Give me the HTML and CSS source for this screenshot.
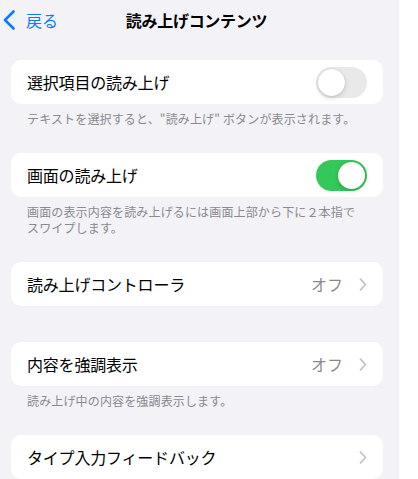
FILE: index.html
```html
<!DOCTYPE html>
<html lang="ja">
<head>
<meta charset="utf-8">
<link rel="stylesheet" href="styles.css">
</head>
<body>
<div class="screen">
  <header class="nav">
    <a class="back">
      <svg class="back-chev" width="14" height="20" viewBox="0 0 14 20"><path d="M11.5 1.5 L3 10 L11.5 18.5" fill="none" stroke="#0a7aff" stroke-width="2.6" stroke-linecap="round" stroke-linejoin="round"/></svg>
      <span>戻る</span>
    </a>
    <h1 class="title">読み上げコンテンツ</h1>
    <span></span>
  </header>

  <section class="section">
    <div class="card row">
      <span class="label">選択項目の読み上げ</span>
      <span class="switch"><span class="knob"></span></span>
    </div>
    <p class="footer">テキストを選択すると、"読み上げ" ボタンが表示されます。</p>
  </section>

  <section class="section">
    <div class="card row">
      <span class="label">画面の読み上げ</span>
      <span class="switch on"><span class="knob"></span></span>
    </div>
    <p class="footer">画面の表示内容を読み上げるには画面上部から下に２本指で<br>スワイプします。</p>
  </section>

  <section class="section nofoot">
    <div class="card row">
      <span class="label">読み上げコントローラ</span>
      <span class="value">オフ<svg class="chev" width="8" height="13" viewBox="0 0 8 13"><path d="M1.5 1.2 L6.5 6.5 L1.5 11.8" fill="none" stroke="#c4c4c7" stroke-width="1.8" stroke-linecap="round" stroke-linejoin="round"/></svg></span>
    </div>
  </section>

  <section class="section">
    <div class="card row">
      <span class="label">内容を強調表示</span>
      <span class="value">オフ<svg class="chev" width="8" height="13" viewBox="0 0 8 13"><path d="M1.5 1.2 L6.5 6.5 L1.5 11.8" fill="none" stroke="#c4c4c7" stroke-width="1.8" stroke-linecap="round" stroke-linejoin="round"/></svg></span>
    </div>
    <p class="footer">読み上げ中の内容を強調表示します。</p>
  </section>

  <section class="section">
    <div class="card row">
      <span class="label">タイプ入力フィードバック</span>
      <span class="value"><svg class="chev" width="8" height="13" viewBox="0 0 8 13"><path d="M1.5 1.2 L6.5 6.5 L1.5 11.8" fill="none" stroke="#c4c4c7" stroke-width="1.8" stroke-linecap="round" stroke-linejoin="round"/></svg></span>
    </div>
  </section>
</div>
</body>
</html>
```
FILE: styles.css
```css
* { box-sizing: border-box; }
html, body {
  margin: 0;
  padding: 0;
  background: #ffffff;
}
body {
  font-family: "Noto Sans CJK JP", "Noto Sans", sans-serif;
  color: #000;
}
.screen {
  width: 399px;
  height: 479px;
  background: #f2f2f7;
  overflow: hidden;
}
.nav {
  height: 40px;
  display: grid;
  grid-template-columns: 1fr auto 1fr;
  align-items: center;
  padding-right: 6px;
}
.back {
  display: flex;
  align-items: center;
  color: #0a7aff;
  font-size: 16px;
  padding-left: 2px;
  gap: 10px;
}
.back-chev { display: block; }
.title {
  margin: 0;
  font-size: 16px;
  font-weight: 700;
  letter-spacing: -0.3px;
}
.section {
  margin: 20px 16px 0 11px;
}
.section + .section { margin-top: 26px; }
.nofoot + .section { margin-top: 36px; }
.card {
  background: #fff;
  border-radius: 10px;
}
.row {
  height: 44px;
  display: flex;
  align-items: center;
  justify-content: space-between;
  padding: 0 16px;
}
.label {
  font-size: 16px;
  letter-spacing: -0.2px;
}
.value {
  display: flex;
  align-items: center;
  color: #8a8a8e;
  font-size: 16px;
  gap: 16px;
}
.chev { display: block; }
.switch {
  width: 51px;
  height: 31px;
  border-radius: 16px;
  background: #e9e9ea;
  padding: 2px;
  display: flex;
}
.switch .knob {
  width: 27px;
  height: 27px;
  border-radius: 50%;
  background: #fff;
  box-shadow: 0 2px 5px rgba(0,0,0,0.15), 0 0 1px rgba(0,0,0,0.2);
}
.switch.on {
  background: #34c759;
  justify-content: flex-end;
}
.footer {
  margin: 0;
  padding: 7px 16px 0;
  font-size: 12px;
  line-height: 16px;
  letter-spacing: 0.15px;
  color: #8a8a8e;
}
```
